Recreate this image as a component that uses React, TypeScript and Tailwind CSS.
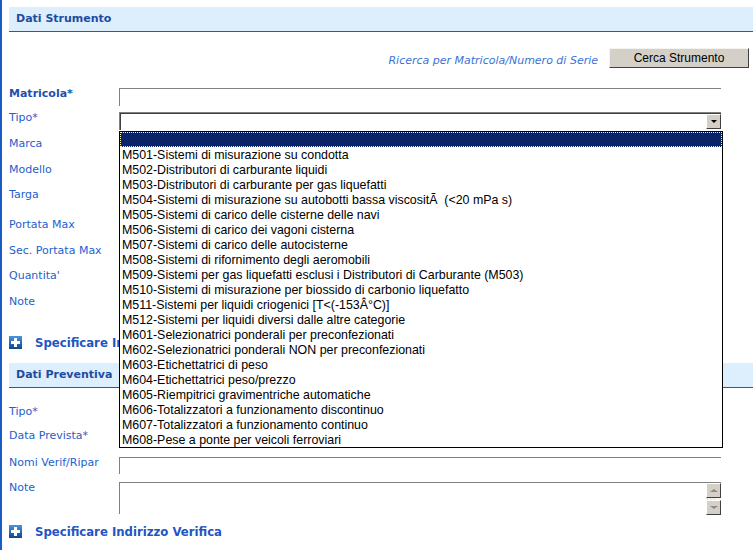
import React from "react";

const tipi: string[] = [
  "M501-Sistemi di misurazione su condotta",
  "M502-Distributori di carburante liquidi",
  "M503-Distributori di carburante per gas liquefatti",
  "M504-Sistemi di misurazione su autobotti bassa viscositÃ\u00a0 (<20 mPa s)",
  "M505-Sistemi di carico delle cisterne delle navi",
  "M506-Sistemi di carico dei vagoni cisterna",
  "M507-Sistemi di carico delle autocisterne",
  "M508-Sistemi di rifornimento degli aeromobili",
  "M509-Sistemi per gas liquefatti esclusi i Distributori di Carburante (M503)",
  "M510-Sistemi di misurazione per biossido di carbonio liquefatto",
  "M511-Sistemi per liquidi criogenici [T<(-153Â°C)]",
  "M512-Sistemi per liquidi diversi dalle altre categorie",
  "M601-Selezionatrici ponderali per preconfezionati",
  "M602-Selezionatrici ponderali NON per preconfezionati",
  "M603-Etichettatrici di peso",
  "M604-Etichettatrici peso/prezzo",
  "M605-Riempitrici gravimentriche automatiche",
  "M606-Totalizzatori a funzionamento discontinuo",
  "M607-Totalizzatori a funzionamento continuo",
  "M608-Pese a ponte per veicoli ferroviari",
];

const SectionHeader: React.FC<{ title: string }> = ({ title }) => (
  <div className="h-[25px] bg-[#ddeefd] border-b border-[#1d5bbf] pl-[7px] flex items-center">
    <span className="font-bold text-[11px] text-[#1d4ca3]">{title}</span>
  </div>
);

const TextInput: React.FC<{ h?: string }> = ({ h = "h-[18px]" }) => (
  <div className={`w-[602px] mt-[1px] ${h} bg-white border-t border-l border-[#808080]`} />
);

const PlusIcon: React.FC = () => (
  <svg width="13" height="13" viewBox="0 0 13 13" className="shrink-0">
    <defs>
      <linearGradient id="pg" x1="0" y1="0" x2="0" y2="1">
        <stop offset="0" stopColor="#4c93dc" />
        <stop offset="1" stopColor="#0b4796" />
      </linearGradient>
    </defs>
    <rect x="0" y="0" width="13" height="13" fill="url(#pg)" />
    <rect x="5" y="2" width="3" height="9" fill="#fff" />
    <rect x="2" y="5" width="9" height="3" fill="#fff" />
  </svg>
);

const Row: React.FC<{ label: string; h: string; bold?: boolean; children?: React.ReactNode }> = ({
  label,
  h,
  bold,
  children,
}) => (
  <div className={`flex items-start ${h}`}>
    <div
      className={`w-[110px] shrink-0 leading-[14px] text-[11px] ${
        bold ? "font-bold text-[#1c50b0]" : "text-[#1e60cc]"
      }`}
    >
      {label}
    </div>
    {children}
  </div>
);

const Specificare: React.FC<{ text: string }> = ({ text }) => (
  <div className="flex items-center h-[14px]">
    <PlusIcon />
    <span className="ml-[13px] mt-[2px] font-bold text-[11.7px] leading-[14px] text-[#1f56c2] whitespace-nowrap">
      {text}
    </span>
  </div>
);

const App: React.FC = () => {
  return (
    <div className="min-h-[550px] w-[753px] bg-white border-l-2 border-[#1a5cc4] pl-[7px] pt-[7px] font-['DejaVu_Sans',Verdana,sans-serif] overflow-hidden">
      <SectionHeader title="Dati Strumento" />

      <div className="flex justify-end items-end mt-[16px] pr-[4px]">
        <span className="italic text-[11px] leading-[14px] text-[#3a72d8] mr-[11px]">
          Ricerca per Matricola/Numero di Serie
        </span>
        <button className="w-[140px] h-[20px] bg-[#d4d0c8] border-t border-l border-[#f4f3ef] border-r border-b border-r-[#404040] border-b-[#404040] font-['Liberation_Sans',Arial,sans-serif] text-[12px] text-black leading-none">
          Cerca Strumento
        </button>
      </div>

      <div className="mt-[19px]">
        <Row label="Matricola*" h="h-[24px]" bold>
          <TextInput />
        </Row>
        <Row label="Tipo*" h="h-[26px]">
          <div className="relative w-[602px] mt-[1px] h-[18px] bg-white border-t border-l border-[#808080] shadow-[inset_1px_1px_0_#404040]">
            <div className="absolute right-0 top-[1px] w-[15px] h-[15px] bg-[#d4d0c8] border-t border-l border-white border-r border-b border-r-[#404040] border-b-[#404040] flex items-center justify-center">
              <div className="w-0 h-0 border-l-[3px] border-r-[3px] border-t-[3px] border-l-transparent border-r-transparent border-t-black" />
            </div>
            <div className="absolute left-[-1px] top-[18px] z-10 w-[604px] bg-white border border-black font-['Liberation_Sans',Arial,sans-serif] text-[12.4px] leading-[15px] text-black">
              <div className="h-[15px] bg-[#0a246a] border border-dotted border-[#fff3b0]" />
              {tipi.map((t) => (
                <div key={t} className="h-[15px] pl-[2px] pt-[1px] whitespace-pre">
                  {t}
                </div>
              ))}
            </div>
          </div>
        </Row>
        <Row label="Marca" h="h-[26px]">
          <TextInput />
        </Row>
        <Row label="Modello" h="h-[25px]">
          <TextInput />
        </Row>
        <Row label="Targa" h="h-[30px]">
          <TextInput />
        </Row>
        <Row label="Portata Max" h="h-[26px]">
          <TextInput />
        </Row>
        <Row label="Sec. Portata Max" h="h-[25px]">
          <TextInput />
        </Row>
        <Row label="Quantita'" h="h-[26px]">
          <TextInput />
        </Row>
        <Row label="Note" h="h-[40px]">
          <TextInput h="h-[32px]" />
        </Row>
      </div>

      <Specificare text="Specificare Indirizzo Strumento" />

      <div className="mt-[14px]">
        <SectionHeader title="Dati Preventiva" />
      </div>

      <div className="mt-[17px]">
        <Row label="Tipo*" h="h-[24px]" />
        <Row label="Data Prevista*" h="h-[27px]" />
        <Row label="Nomi Verif/Ripar" h="h-[25px]">
          <TextInput h="h-[17px]" />
        </Row>
        <Row label="Note" h="h-[43px]">
          <div className="relative w-[602px] mt-[1px] h-[32px] bg-white border-t border-l border-[#808080]">
            <div className="absolute right-0 top-0 w-[15px] h-[32px] flex flex-col bg-[repeating-linear-gradient(45deg,#e8e6e0_0px,#e8e6e0_1px,#ffffff_1px,#ffffff_2px)]">
              <div className="w-[15px] h-[15px] bg-[#d4d0c8] border-t border-l border-white border-r border-b border-r-[#404040] border-b-[#404040] flex items-center justify-center">
                <div className="w-0 h-0 border-l-[4px] border-r-[4px] border-b-[3px] border-l-transparent border-r-transparent border-b-[#8a8a8a]" />
              </div>
              <div className="flex-1" />
              <div className="w-[15px] h-[15px] bg-[#d4d0c8] border-t border-l border-white border-r border-b border-r-[#404040] border-b-[#404040] flex items-center justify-center">
                <div className="w-0 h-0 border-l-[4px] border-r-[4px] border-t-[3px] border-l-transparent border-r-transparent border-t-[#8a8a8a]" />
              </div>
            </div>
          </div>
        </Row>
      </div>

      <Specificare text="Specificare Indirizzo Verifica" />
    </div>
  );
};

export default App;
